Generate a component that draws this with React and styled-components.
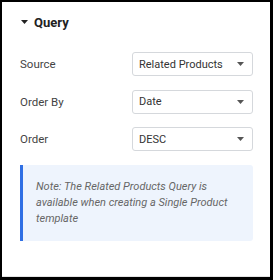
import React from "react";
import styled, { createGlobalStyle } from "styled-components";

const Global = createGlobalStyle`
  html, body { margin: 0; padding: 0; background: #000; }
  body { width: 273px; height: 280px; overflow: hidden; font-family: Roboto, "Liberation Sans", sans-serif; }
`;

const Panel = styled.div`
  box-sizing: border-box;
  margin: 2px 3px 0 2px;
  width: 268px;
  height: 275px;
  background: #fff;
  border-bottom: 1px solid #e4e4e4;
  padding: 12px 17px 0 18px;
  display: flex;
  flex-direction: column;
`;

const Header = styled.div`
  display: flex;
  align-items: center;
  gap: 6px;
  height: 16px;
  font-size: 13px;
  font-weight: 700;
  color: #222;
  margin-bottom: 22px;
`;

const Caret = styled.svg`
  margin-left: 1px;
  display: block;
`;

const Rows = styled.div`
  display: flex;
  flex-direction: column;
  gap: 13.5px;
`;

const Row = styled.div`
  display: flex;
  align-items: center;
  justify-content: space-between;
  height: 24px;
`;

const Label = styled.span`
  font-size: 11.5px;
  color: #444;
`;

const Select = styled.div`
  box-sizing: border-box;
  width: 121px;
  height: 24px;
  border: 1px solid #d5d8dc;
  border-radius: 3px;
  display: flex;
  align-items: center;
  justify-content: space-between;
  padding: 0 8px 0 6px;
  font-size: 11px;
  color: #333;
`;

const Note = styled.div`
  margin-top: 14px;
  box-sizing: border-box;
  width: 233px;
  background: #eef4fd;
  border-left: 3px solid #2f6fe4;
  border-radius: 0 3px 3px 0;
  padding: 14px 12px 14px 13px;
  font-size: 11px;
  line-height: 16px;
  font-style: italic;
  color: #666;
`;

const Arrow = () => (
  <svg width="7" height="4" viewBox="0 0 7 4">
    <path d="M0 0 H7 L3.5 4 Z" fill="#555" />
  </svg>
);

const Field = ({ label, value }) => (
  <Row>
    <Label>{label}</Label>
    <Select>
      <span>{value}</span>
      <Arrow />
    </Select>
  </Row>
);

export default function App() {
  return (
    <>
      <Global />
      <Panel>
        <Header>
          <Caret width="7" height="4" viewBox="0 0 7 4">
            <path d="M0 0 H7 L3.5 4 Z" fill="#222" />
          </Caret>
          <span>Query</span>
        </Header>
        <Rows>
          <Field label="Source" value="Related Products" />
          <Field label="Order By" value="Date" />
          <Field label="Order" value="DESC" />
        </Rows>
        <Note>
          Note: The Related Products Query is available when creating a Single Product template
        </Note>
      </Panel>
    </>
  );
}
